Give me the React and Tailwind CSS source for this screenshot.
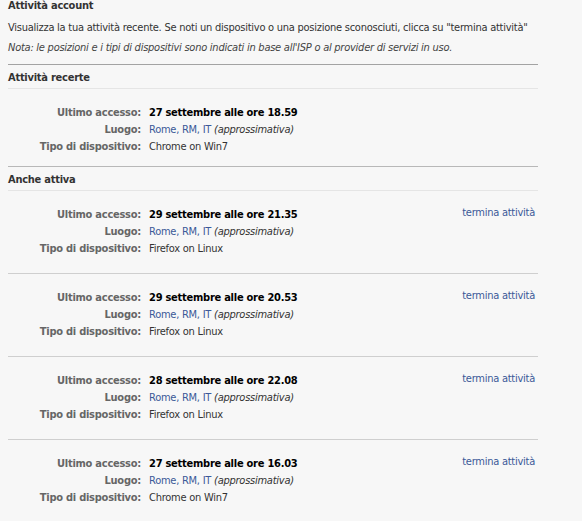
import React from 'react';

const sessions = [
    { when: '29 settembre alle ore 21.35', device: 'Firefox on Linux' },
    { when: '29 settembre alle ore 20.53', device: 'Firefox on Linux' },
    { when: '28 settembre alle ore 22.08', device: 'Firefox on Linux' },
    { when: '27 settembre alle ore 16.03', device: 'Chrome on Win7' },
];

const Detail = ({ when, device }) => (
    <div className="grid grid-cols-[133px_1fr] gap-x-2 leading-[17px]">
        <span className="text-right font-bold text-[#666]">Ultimo accesso:</span>
        <span className="font-bold text-black">{when}</span>
        <span className="text-right font-bold text-[#666]">Luogo:</span>
        <span>
            <a href="#" className="text-[#3b5998]">Rome, RM, IT</a>{' '}
            <i className="text-[#333]">(approssimativa)</i>
        </span>
        <span className="text-right font-bold text-[#666]">Tipo di dispositivo:</span>
        <span className="text-[#333]">{device}</span>
    </div>
);

const SectionTitle = ({ children }) => (
    <div className="pt-[6px] pb-[3px] leading-[14px] font-bold text-[#333] border-b border-[#e5e5e5]">
        {children}
    </div>
);

const App = () => {
    return (
        <div className="min-h-[521px] bg-[#f7f7f7] text-[11px] tracking-[-0.25px] text-[#333] font-['DejaVu_Sans_Condensed','DejaVu_Sans',sans-serif]">
            <div className="w-[530px] ml-2">
                <div className="leading-[12px] font-bold">Attività account</div>
                <div className="mt-[9px] leading-[14px] whitespace-nowrap">
                    Visualizza la tua attività recente. Se noti un dispositivo o una posizione sconosciuti, clicca su "termina attività"
                </div>
                <div className="mt-[6px] leading-[14px] italic text-[#444] whitespace-nowrap">
                    Nota: le posizioni e i tipi di dispositivi sono indicati in base all'ISP o al provider di servizi in uso.
                </div>
                <div className="mt-[9px] border-t border-[#a3a3a3]" />

                <SectionTitle>Attività recerte</SectionTitle>
                <div className="pt-[15px] pb-[11px] border-b border-[#b8b8b8]">
                    <Detail when="27 settembre alle ore 18.59" device="Chrome on Win7" />
                </div>

                <SectionTitle>Anche attiva</SectionTitle>
                {sessions.map((s, i) => (
                    <div key={i} className="flex items-start pt-[15px] pb-[16px] border-b border-[#cfcfcf] last:border-b-0">
                        <div className="flex-1">
                            <Detail when={s.when} device={s.device} />
                        </div>
                        <a href="#" className="pr-[3px] leading-[14px] text-[#3b5998]">termina attività</a>
                    </div>
                ))}
            </div>
        </div>
    );
};

export default App;
